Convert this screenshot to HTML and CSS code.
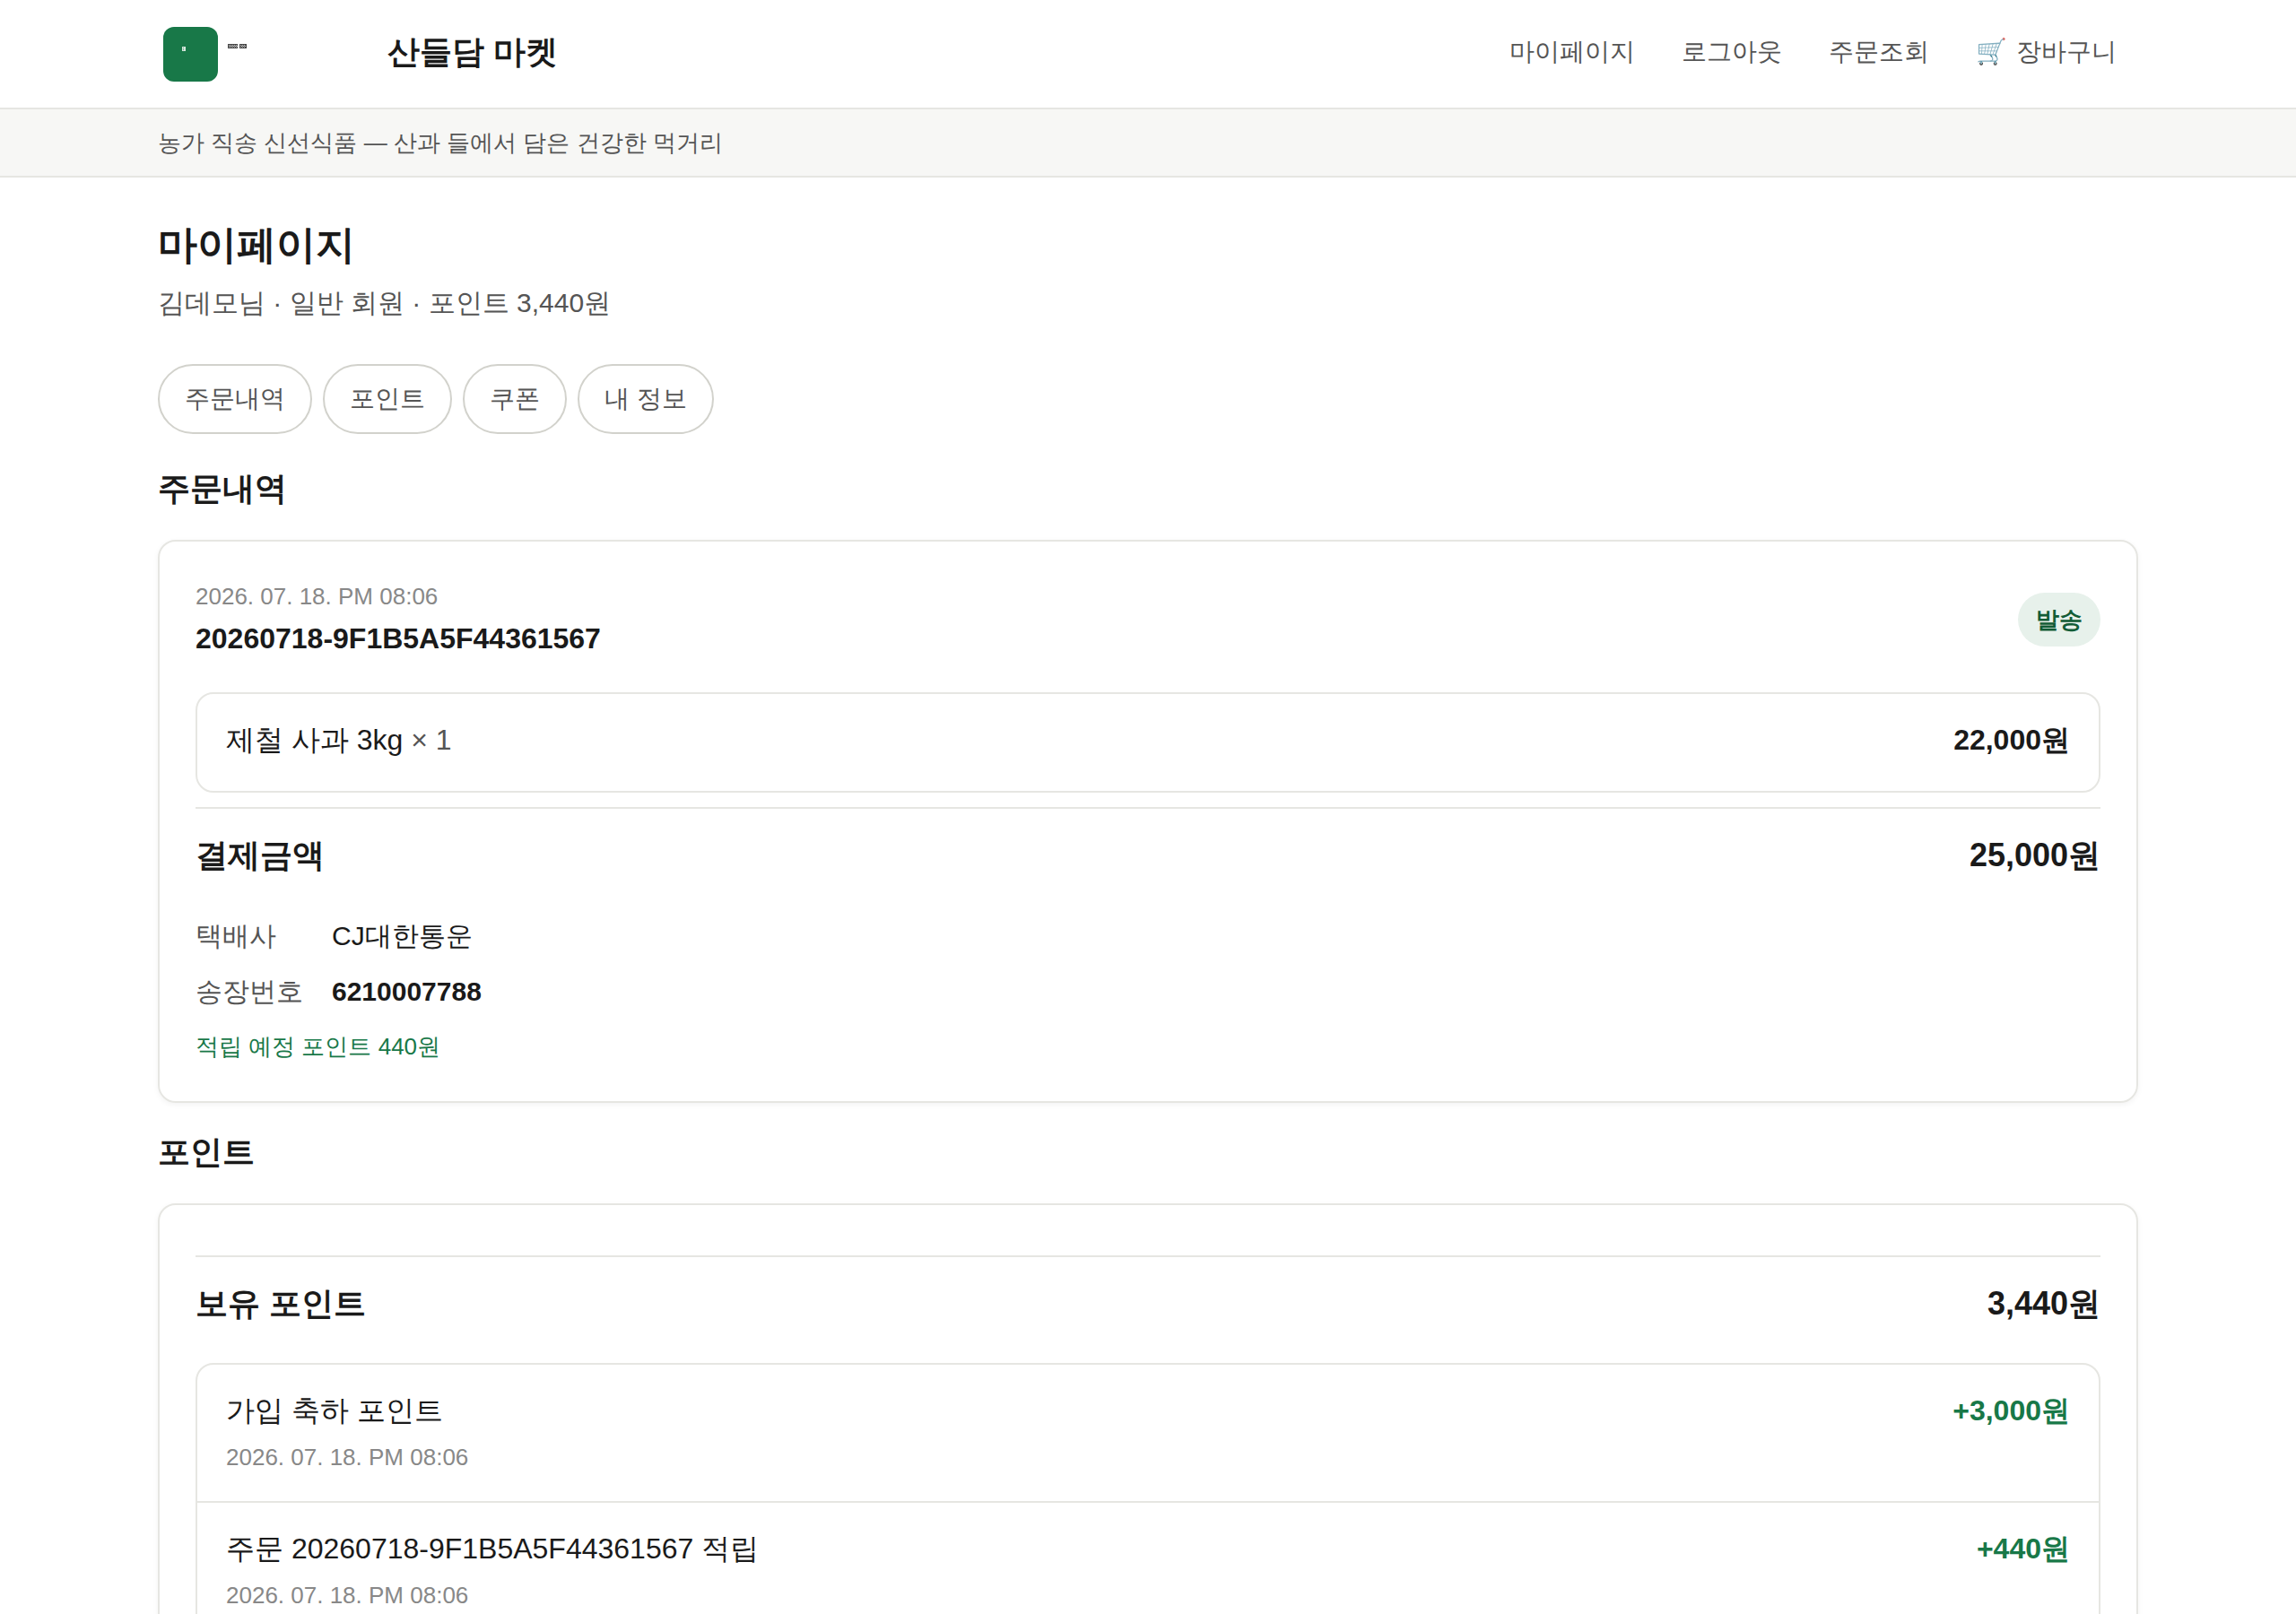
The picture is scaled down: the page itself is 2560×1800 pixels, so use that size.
FILE: index.html
```html
<!DOCTYPE html>
<html lang="ko">

<head>
    <meta charset="UTF-8">
    <meta name="viewport" content="width=device-width, initial-scale=1.0">
    <title>마이페이지 | 산들담 마켓</title>
    <link rel="stylesheet" href="styles.css">
</head>

<body>
    <header class="site-header">
        <div class="wrap header-inner">
            <a class="brand" href="/">
                <svg class="logo" viewBox="0 0 240 72" aria-hidden="true">
                    <rect x="6" y="8" width="61" height="61" rx="12" fill="#187848" />
                    <rect x="27" y="30" width="4" height="5" fill="#d5e6dc" />
                    <path d="M28 31.500h2M28 33.500h2" stroke="#5fa07f" stroke-dasharray="1 1" />
                    <g fill="#444">
                        <rect x="78" y="27" width="11" height="5" />
                        <rect x="91" y="27" width="8" height="5" />
                    </g>
                    <path d="M79 28.500h10M80 29.500h9M79 30.500h10M92 28.500h6M93 29.500h5M92 30.500h6" stroke="#ccc" stroke-dasharray="1 1" />
                </svg>
                <span class="brand-name">산들담 마켓</span>
            </a>
            <nav class="site-nav">
                <a href="/mypage">마이페이지</a>
                <a href="/logout">로그아웃</a>
                <a href="/orders">주문조회</a>
                <a class="cart" href="/cart"><span>🛒</span>장바구니</a>
            </nav>
        </div>
    </header>
    <div class="notice">
        <p class="wrap">농가 직송 신선식품 — 산과 들에서 담은 건강한 먹거리</p>
    </div>

    <main class="wrap">
        <h1>마이페이지</h1>
        <p class="lead">김데모님 · 일반 회원 · 포인트 3,440원</p>
        <nav class="tabs">
            <a href="#orders">주문내역</a>
            <a href="#points">포인트</a>
            <a href="#coupons">쿠폰</a>
            <a href="#profile">내 정보</a>
        </nav>

        <h2 id="orders">주문내역</h2>
        <section class="card">
            <div class="order-head">
                <div>
                    <div class="date">2026. 07. 18. PM 08:06</div>
                    <strong class="order-no">20260718-9F1B5A5F44361567</strong>
                </div>
                <span class="badge">발송</span>
            </div>
            <ul class="list">
                <li>
                    <div>제철 사과 3kg <span class="muted">× 1</span></div>
                    <strong>22,000원</strong>
                </li>
            </ul>
            <div class="total">
                <span>결제금액</span>
                <span>25,000원</span>
            </div>
            <dl class="shipping">
                <dt>택배사</dt>
                <dd>CJ대한통운</dd>
                <dt>송장번호</dt>
                <dd><strong>6210007788</strong></dd>
            </dl>
            <p class="reward">적립 예정 포인트 440원</p>
        </section>

        <h2 id="points">포인트</h2>
        <section class="card">
            <div class="total">
                <span>보유 포인트</span>
                <span>3,440원</span>
            </div>
            <ul class="list">
                <li>
                    <div>
                        가입 축하 포인트
                        <div class="date">2026. 07. 18. PM 08:06</div>
                    </div>
                    <strong class="plus">+3,000원</strong>
                </li>
                <li>
                    <div>
                        주문 20260718-9F1B5A5F44361567 적립
                        <div class="date">2026. 07. 18. PM 08:06</div>
                    </div>
                    <strong class="plus">+440원</strong>
                </li>
            </ul>
        </section>
    </main>
</body>

</html>
```
FILE: styles.css
```css
* {
    box-sizing: border-box;
    margin: 0;
    padding: 0;
}

body {
    font-family: "Liberation Sans", sans-serif;
    font-size: 32px;
    line-height: 52px;
    color: #1a1a1a;
    background-color: #fff;
}

a {
    color: inherit;
    text-decoration: none;
}

.wrap {
    max-width: 2240px;
    margin: 0 auto;
    padding: 0 16px;
}

/* header */
.site-header {
    border-bottom: 2px solid #e6e6e2;
}

.header-inner {
    display: flex;
    align-items: center;
    justify-content: space-between;
    min-height: 120px;
    padding-bottom: 4px;
}

.brand {
    display: flex;
    align-items: center;
    gap: 16px;
    font-size: 36px;
    font-weight: 800;
}

.logo {
    width: 240px;
    height: 72px;
}

.site-nav {
    display: flex;
    gap: 4px;
    font-size: 28px;
    line-height: 46px;
    color: #555;
}

.site-nav a {
    padding: 0 24px;
}

.site-nav .cart {
    display: flex;
    gap: 10px;
}

.notice {
    padding: 16px 0;
    border-bottom: 2px solid #e6e6e2;
    background-color: #f7f7f5;
    font-size: 26px;
    line-height: 42px;
    color: #555;
}

/* page head */
main {
    padding-bottom: 96px;
}

h1 {
    margin-top: 48px;
    font-size: 44px;
    line-height: 54px;
    font-weight: 800;
}

.lead {
    margin-top: 14px;
    font-size: 30px;
    line-height: 48px;
    color: #555;
}

.tabs {
    display: flex;
    flex-wrap: wrap;
    gap: 12px;
    margin-top: 44px;
}

.tabs a {
    padding: 14px 28px;
    border: 2px solid #d2d2cc;
    border-radius: 40px;
    font-size: 28px;
    line-height: 46px;
    color: #555;
}

h2 {
    margin: 38px 0 34px;
    font-size: 36px;
    line-height: 46px;
    font-weight: 800;
}

/* cards */
.card {
    padding: 40px;
    border: 2px solid #e6e6e2;
    border-radius: 20px;
    box-shadow: 0 2px 6px rgba(0, 0, 0, 0.05);
}

.card + h2 {
    margin-top: 32px;
}

.order-head {
    display: flex;
    align-items: center;
    justify-content: space-between;
    margin-bottom: 34px;
}

.date {
    font-size: 26px;
    line-height: 42px;
    color: #888;
}

.order-no {
    display: block;
}

.badge {
    padding: 9px 20px;
    border-radius: 30px;
    background-color: #e7f1eb;
    font-size: 26px;
    line-height: 42px;
    font-weight: bold;
    color: #125c36;
}

.list {
    border: 2px solid #e6e6e2;
    border-radius: 20px;
    list-style: none;
}

.list li {
    display: flex;
    justify-content: space-between;
    min-height: 108px;
    padding: 28px 32px;
    line-height: 46px;
}

.list li + li {
    border-top: 2px solid #e6e6e2;
}

.list .date {
    margin-top: 8px;
    line-height: 42px;
}

.muted {
    color: #555;
}

.plus,
.reward {
    color: #187848;
}

.total {
    display: flex;
    justify-content: space-between;
    margin-top: 16px;
    padding: 24px 0 26px;
    border-top: 2px solid #e6e6e2;
    font-size: 36px;
    line-height: 56px;
    font-weight: bold;
}

.total + .list {
    margin-top: 12px;
}

.shipping {
    display: grid;
    grid-template-columns: max-content 1fr;
    gap: 14px 32px;
    margin-top: 12px;
    font-size: 30px;
    line-height: 48px;
}

.shipping dt {
    color: #555;
}

.reward {
    margin-top: 16px;
    font-size: 26px;
    line-height: 42px;
}
```
